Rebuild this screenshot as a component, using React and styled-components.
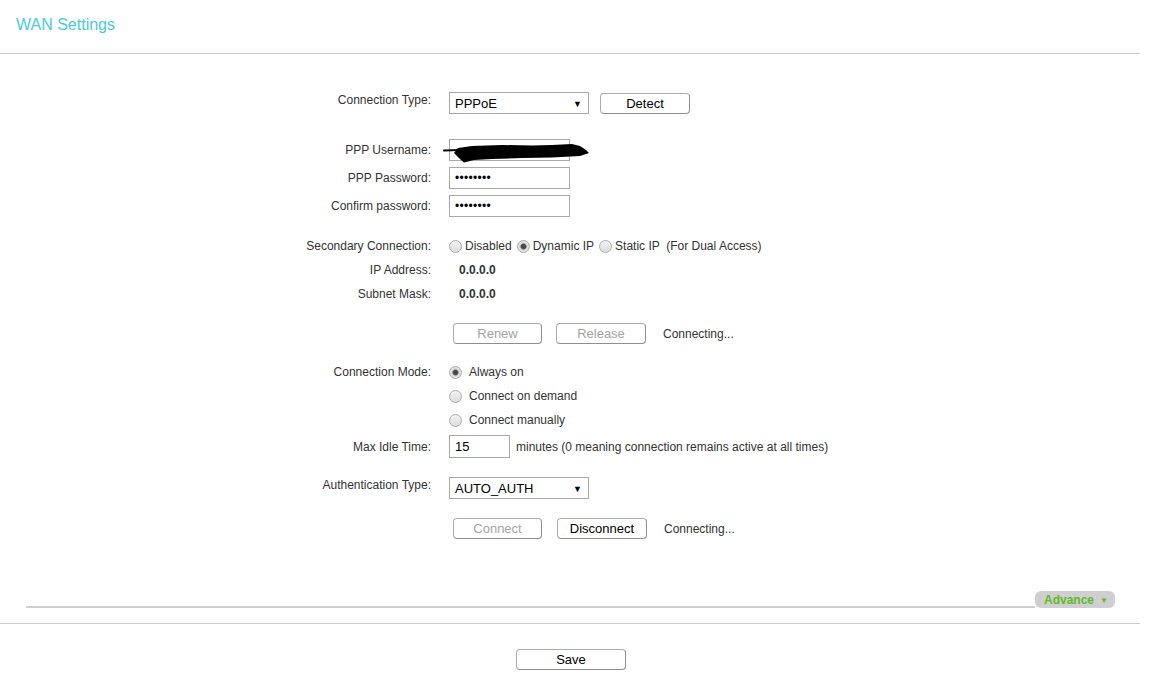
import React from 'react';
import styled, { createGlobalStyle } from 'styled-components';

const Global = createGlobalStyle`
  html, body { margin: 0; padding: 0; background: #fff; }
  body {
    font-family: "Liberation Sans", Arial, sans-serif;
    font-size: 12px;
    color: #333;
  }
  * { box-sizing: border-box; }
`;

const Page = styled.div`
  width: 1140px;
`;

const Header = styled.header`
  height: 54px;
  border-bottom: 1px solid #ccc;
  padding: 15px 0 0 16px;
`;

const Title = styled.h1`
  margin: 0;
  font-size: 16px;
  line-height: 20px;
  font-weight: normal;
  color: #4acbd6;
`;

const Form = styled.div`
  display: flex;
  flex-direction: column;
`;

const Row = styled.div`
  display: grid;
  grid-template-columns: 431px 1fr;
  column-gap: 18px;
  align-items: center;
  height: ${p => p.$h || 18}px;
  margin-top: ${p => p.$mt || 0}px;
`;

const Label = styled.div`
  text-align: right;
  white-space: nowrap;
  line-height: ${p => (p.$top ? '16px' : '14px')};
  align-self: ${p => (p.$top ? 'start' : 'center')};
`;

const Field = styled.div`
  display: flex;
  align-items: center;
  height: 100%;
  gap: ${p => p.$gap || 0}px;
  padding-left: ${p => p.$pl || 0}px;
  white-space: pre;
`;

const SelectBox = styled.div`
  width: 140px;
  height: 22px;
  border: 1px solid #a9a9a9;
  display: flex;
  align-items: center;
  justify-content: space-between;
  padding: 1px 6px 0 5px;
  font-size: 13px;
  color: #000;
  background: #fff;
`;

const Arrow = styled.span`
  font-size: 9px;
  color: #000;
`;

const TextBox = styled.div`
  position: relative;
  width: ${p => p.$w || 121}px;
  height: ${p => p.$h || 22}px;
  border: 1px solid #a9a9a9;
  display: flex;
  align-items: center;
  padding: 0 5px;
  font-size: 13px;
  color: #000;
  background: #fff;
`;

const Dots = styled.span`
  font-size: 12px;
  letter-spacing: 0.3px;
  color: #000;
`;

const Scribble = styled.svg`
  position: absolute;
  left: -8px;
  top: -4px;
  width: 150px;
  height: 28px;
  overflow: visible;
`;

const Button = styled.button`
  width: ${p => p.$w || 90}px;
  height: 21px;
  margin-left: ${p => p.$ml || 0}px;
  border: 1px solid #adadad;
  border-right-color: #8f8f8f;
  border-bottom-color: #8f8f8f;
  border-radius: 4px;
  background: #fff;
  padding: 0;
  font-family: "Liberation Sans", Arial, sans-serif;
  font-size: 13px;
  color: ${p => (p.$disabled ? '#a3a3a3' : '#000')};
`;

const Note = styled.span`
  margin-left: ${p => p.$ml || 0}px;
  color: #333;
`;

const Value = styled.span`
  font-weight: bold;
  padding-left: 10px;
  color: #333;
`;

const RadioItem = styled.span`
  display: inline-flex;
  align-items: center;
  gap: ${p => p.$gap || 3}px;
  margin-right: ${p => p.$mr || 0}px;
`;

const Radio = styled.span`
  display: inline-block;
  width: 13px;
  height: 13px;
  border-radius: 50%;
  border: 1px solid #ababab;
  background: ${p =>
    p.$checked
      ? 'radial-gradient(circle, #4a4a4a 0 2.2px, #8a8a8a 2.8px, #dadada 3.6px, #ececec 100%)'
      : 'linear-gradient(#f4f4f4, #dcdcdc)'};
  flex-shrink: 0;
`;

const AdvanceBar = styled.div`
  display: flex;
  align-items: flex-end;
  margin-top: 52px;
  padding: 0 25px 0 26px;
`;

const Rule = styled.div`
  flex: 1;
  height: 2px;
  background: #cfcfcf;
`;

const Pill = styled.div`
  width: 80px;
  height: 17px;
  border-radius: 6px;
  background: #cfcfcf;
  color: #5fb82a;
  font-weight: bold;
  font-size: 12px;
  display: flex;
  align-items: center;
  justify-content: center;
  gap: 6px;
  padding-left: 2px;
`;

const Caret = styled.span`
  font-size: 8px;
  color: #5fb82a;
  transform: translateY(1px);
`;

const Footer = styled.footer`
  margin-top: 15px;
  border-top: 1px solid #ccc;
  padding-top: 25px;
  display: flex;
  justify-content: center;
  padding-left: 2px;
`;

export default function App() {
  return (
    <Page>
      <Global />
      <Header>
        <Title>WAN Settings</Title>
      </Header>
      <Form>
        <Row $mt={38} $h={22}>
          <Label $top>Connection Type:</Label>
          <Field>
            <SelectBox>
              <span>PPPoE</span>
              <Arrow>▼</Arrow>
            </SelectBox>
            <Button $w={90} $ml={11}>Detect</Button>
          </Field>
        </Row>

        <Row $mt={25} $h={22}>
          <Label>PPP Username:</Label>
          <Field>
            <TextBox>
              <Scribble viewBox="0 0 150 28">
                <path d="M2 14.5 L18 14" stroke="#000" strokeWidth="2" fill="none" strokeLinecap="round" />
                <path
                  d="M12 17 L16 12 L30 10 L60 9 L90 9.5 L110 9 L130 8 L138 10 L144 14 L147 17 L138 20 L110 21.5 L80 22 L50 23 L32 24 L22 26.5 L18 23 Z"
                  fill="#000"
                />
              </Scribble>
            </TextBox>
          </Field>
        </Row>

        <Row $mt={6} $h={22}>
          <Label>PPP Password:</Label>
          <Field>
            <TextBox><Dots>••••••••</Dots></TextBox>
          </Field>
        </Row>

        <Row $mt={6} $h={22}>
          <Label>Confirm password:</Label>
          <Field>
            <TextBox><Dots>••••••••</Dots></TextBox>
          </Field>
        </Row>

        <Row $mt={20}>
          <Label>Secondary Connection:</Label>
          <Field>
            <RadioItem $mr={5}><Radio />Disabled</RadioItem>
            <RadioItem $mr={5}><Radio $checked />Dynamic IP</RadioItem>
            <RadioItem><Radio />{'Static IP  (For Dual Access)'}</RadioItem>
          </Field>
        </Row>

        <Row $mt={6}>
          <Label>IP Address:</Label>
          <Field><Value>0.0.0.0</Value></Field>
        </Row>

        <Row $mt={6}>
          <Label>Subnet Mask:</Label>
          <Field><Value>0.0.0.0</Value></Field>
        </Row>

        <Row $mt={20} $h={21}>
          <span />
          <Field $pl={4}>
            <Button $w={89} $disabled>Renew</Button>
            <Button $w={90} $ml={14} $disabled>Release</Button>
            <Note $ml={17}>Connecting...</Note>
          </Field>
        </Row>

        <Row $mt={19}>
          <Label>Connection Mode:</Label>
          <Field><RadioItem $gap={7}><Radio $checked />Always on</RadioItem></Field>
        </Row>
        <Row $mt={6}>
          <span />
          <Field><RadioItem $gap={7}><Radio />Connect on demand</RadioItem></Field>
        </Row>
        <Row $mt={6}>
          <span />
          <Field><RadioItem $gap={7}><Radio />Connect manually</RadioItem></Field>
        </Row>

        <Row $mt={6} $h={23}>
          <Label>Max Idle Time:</Label>
          <Field>
            <TextBox $w={61} $h={23}>15</TextBox>
            <Note $ml={6}>minutes (0 meaning connection remains active at all times)</Note>
          </Field>
        </Row>

        <Row $mt={19} $h={22}>
          <Label $top>Authentication Type:</Label>
          <Field>
            <SelectBox>
              <span>AUTO_AUTH</span>
              <Arrow>▼</Arrow>
            </SelectBox>
          </Field>
        </Row>

        <Row $mt={19} $h={21}>
          <span />
          <Field $pl={4}>
            <Button $w={89} $disabled>Connect</Button>
            <Button $w={90} $ml={15}>Disconnect</Button>
            <Note $ml={17}>Connecting...</Note>
          </Field>
        </Row>
      </Form>

      <AdvanceBar>
        <Rule />
        <Pill>Advance <Caret>▼</Caret></Pill>
      </AdvanceBar>

      <Footer>
        <Button $w={110}>Save</Button>
      </Footer>
    </Page>
  );
}
